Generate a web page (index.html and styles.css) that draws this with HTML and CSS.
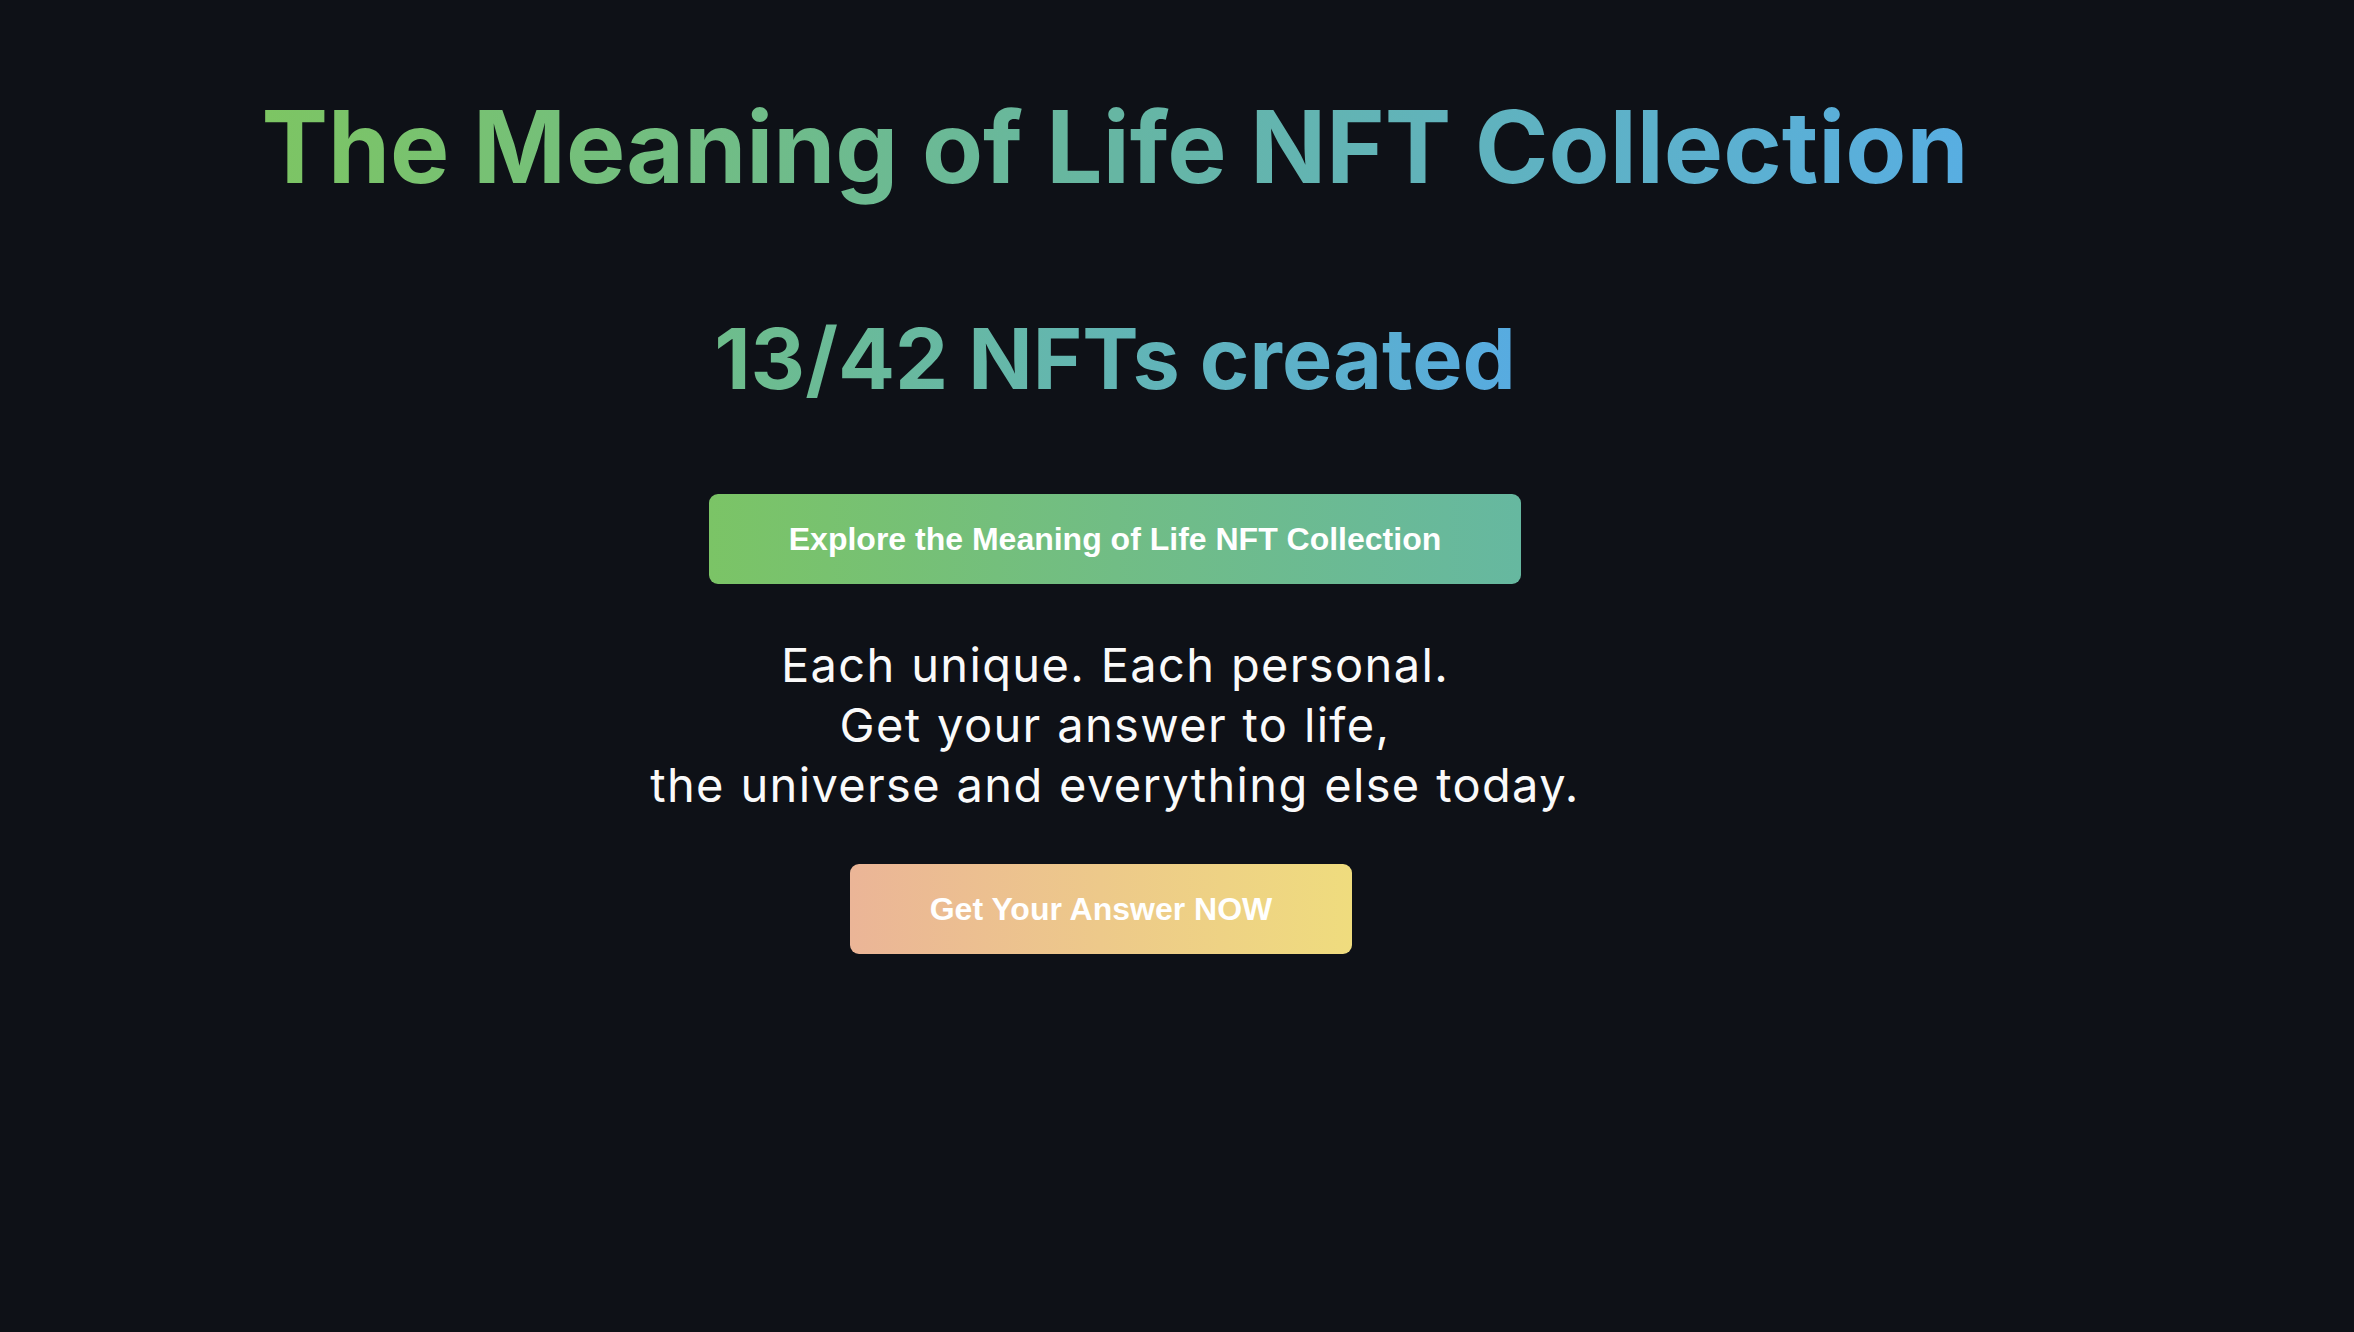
FILE: index.html
```html
<!DOCTYPE html>
<html lang="en">
<head>
<meta charset="utf-8">
<title>The Meaning of Life NFT Collection</title>
<link rel="stylesheet" href="styles.css">
</head>
<body>
<main class="page">
  <h1 class="title">The Meaning of Life NFT Collection</h1>
  <h2 class="count">13/42 NFTs created</h2>
  <a class="btn btn-explore" href="#">Explore the Meaning of Life NFT Collection</a>
  <p class="tagline">Each unique. Each personal.<br>Get your answer to life,<br>the universe and everything else today.</p>
  <a class="btn btn-answer" href="#">Get Your Answer NOW</a>
</main>
</body>
</html>
```

FILE: styles.css
```css
html, body {
  margin: 0;
  padding: 0;
  background: #0e1117;
  height: 100%;
}

body {
  font-family: "Inter", "Noto Sans", sans-serif;
  color: #fafafa;
}

.page {
  display: flex;
  flex-direction: column;
  align-items: center;
  padding-right: 124px;
  padding-top: 87px;
}

.title {
  margin: 0;
  font-size: 99.7px;
  line-height: 1.2;
  font-weight: 700;
  background: linear-gradient(to right, #7dc563 0%, #66b6a3 50%, #58aee2 100%);
  -webkit-background-clip: text;
  background-clip: text;
  color: transparent;
  white-space: nowrap;
}

.count {
  margin: 101px 0 0;
  font-size: 84.5px;
  line-height: 1.2;
  font-weight: 700;
  background: linear-gradient(to right, #6ebd8b 0%, #62b5b4 50%, #57abe1 100%);
  -webkit-background-clip: text;
  background-clip: text;
  color: transparent;
  white-space: nowrap;
}

.btn {
  display: flex;
  align-items: center;
  justify-content: center;
  height: 90px;
  box-sizing: border-box;
  padding: 0 80px;
  border-radius: 9px;
  font-family: "Liberation Sans", Arial, sans-serif;
  font-weight: 700;
  font-size: 32px;
  color: #ffffff;
  text-decoration: none;
  white-space: nowrap;
}

.btn-explore {
  margin-top: 85px;
  background: linear-gradient(to right, #7bc466 0%, #71bd85 50%, #66b8a0 100%);
}

.tagline {
  margin: 51px 0 0;
  font-size: 47px;
  line-height: 60px;
  font-weight: 400;
  letter-spacing: 1.35px;
  word-spacing: 1px;
  text-align: center;
  color: #fafafa;
}

.btn-answer {
  margin-top: 49px;
  margin-right: 28px;
  background: linear-gradient(to right, #ebb597 0%, #edc98a 50%, #efdc7e 100%);
}
```
